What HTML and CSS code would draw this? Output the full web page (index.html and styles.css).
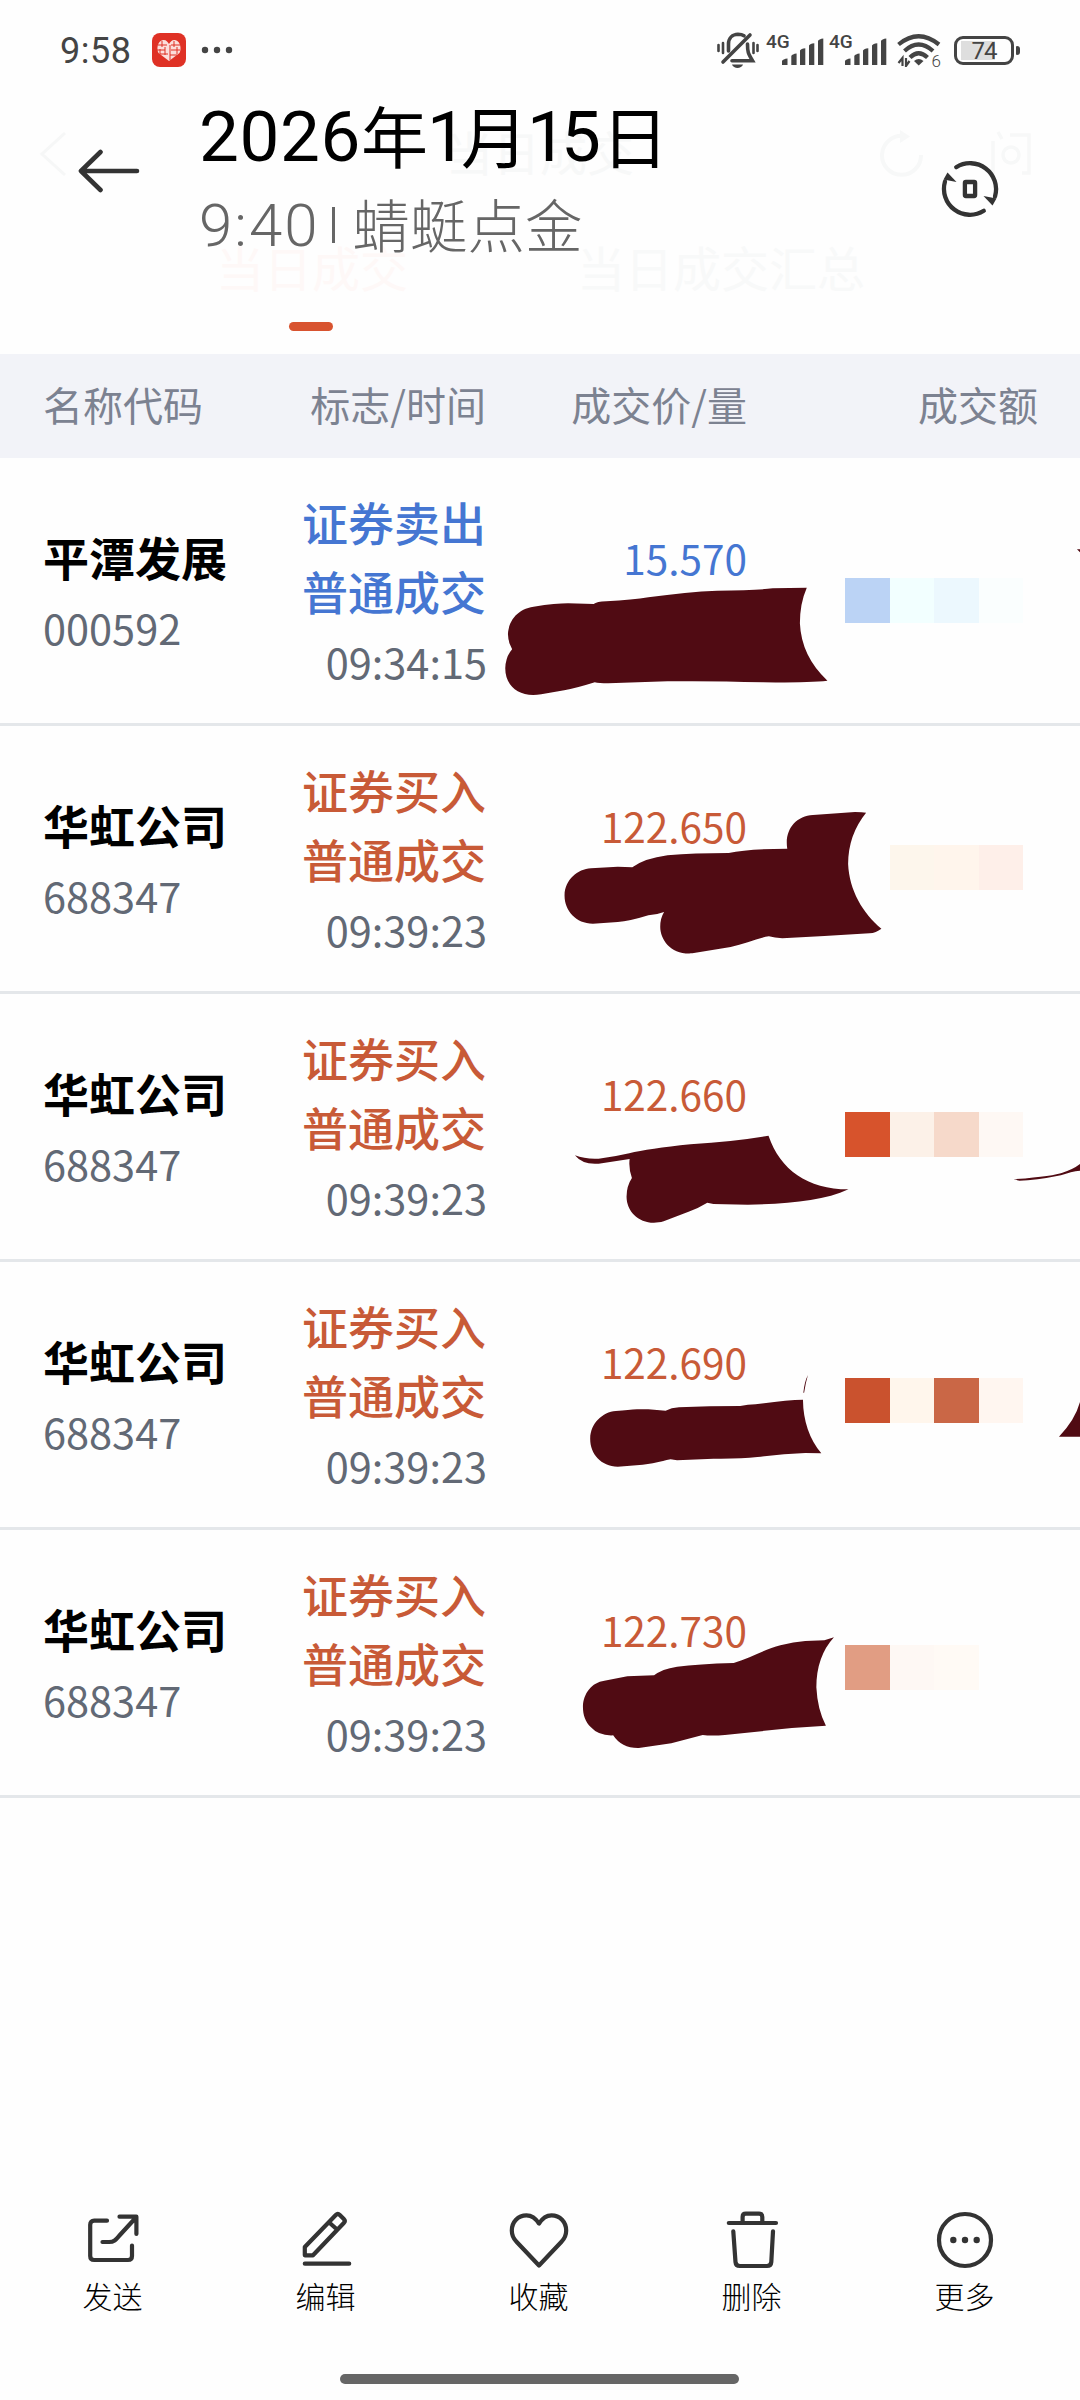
FILE: index.html
```html
<!DOCTYPE html>
<html lang="zh-CN">
<head>
<meta charset="utf-8">
<title>当日成交</title>
<link rel="stylesheet" href="styles.css">
</head>
<body>
<div class="screen">
  <header class="overlay">
    <div class="status">
      <span class="clock">9:58</span>
      <svg class="app" width="34" height="34" viewBox="0 0 34 34"><rect width="34" height="34" rx="8" fill="#df3125"/><path d="M17 28 6.500 20C4.500 17 5 8 11 7c3-.4 4.500 1.500 6 4 1.500-2.500 3-4.400 6-4 6 1 6.500 10 4.500 13Z" fill="#fbdedb"/><path d="M6 12h9M5 17h8M8 21h8M19 12h9M19 17h9M18 22h7M10 8v6M13 14v8M18 12v15M22 8v6M25 14v7M8 16v5" stroke="#df3125" stroke-width="1" fill="none"/></svg>
      <svg class="dots" width="32" height="8" viewBox="0 0 32 8" fill="#444"><circle cx="4" cy="4" r="3.200"/><circle cx="16" cy="4" r="3.200"/><circle cx="28" cy="4" r="3.200"/></svg>
      <div class="tray">
        <svg class="bell" width="42" height="37" viewBox="0 0 42 37" fill="none" stroke="#444" stroke-width="3.600" stroke-linecap="round"><path stroke-width="2.600" d="M1.500 13v6M6 11v10M36.500 11v10M40.500 13v6"/><path d="M11.500 19v-7C11.500 6 15.500 2.500 21 2.300c2.500 0 4.500.5 6 1.500M33 3 6 30M30.500 12c0 8 .5 9 5 16.700H15"/><path d="M15 32.500h11c-1.500 4.500-9.500 4.500-11 0Z" fill="#444" stroke="none"/></svg>
        <div class="signal"><b>4G</b><svg width="42" height="28" viewBox="0 0 42 28" fill="#444"><path d="M0 27v-4q1-2 5.500-2.500V27ZM9.300 27V18q1-2 5.300-2.500V27ZM18 27V12.500q1-2 5.300-2.300V27ZM27 27V7.500q1-2 5.300-2.300V27ZM36 27V3q1-2 5.300-2.500V27Z"/></svg></div>
        <div class="signal"><b>4G</b><svg width="42" height="28" viewBox="0 0 42 28" fill="#444"><path d="M0 27v-4q1-2 5.500-2.500V27ZM9.300 27V18q1-2 5.300-2.500V27ZM18 27V12.500q1-2 5.300-2.300V27ZM27 27V7.500q1-2 5.300-2.300V27ZM36 27V3q1-2 5.300-2.500V27Z"/></svg></div>
        <div class="wifi"><svg width="44" height="33" viewBox="0 0 44 33" fill="none" stroke="#444" stroke-width="4.200"><path d="M1.500 10.500Q21.500-6 42 10.500M7.500 17Q21.500 4 36 17M13 23.500Q21.500 15 30.500 23.500"/><path d="M17 27q4.700-4 9.500 0l-4.800 4.500Z" fill="#444" stroke="none"/><path stroke-width="2.200" d="M5.500 32v-8l-4 5M9 24v8l3.500-5"/></svg><i>6</i></div>
        <div class="battery"><span>74</span></div>
      </div>
    </div>
    <div class="bar">
      <svg class="back" width="64" height="44" viewBox="0 0 64 44" fill="none" stroke="#333" stroke-width="4.600" stroke-linecap="round" stroke-linejoin="round"><path d="M60 22H4M23.500 3 4 22l19.500 19"/></svg>
      <div class="titles">
        <h1><span class="num">2026</span>年<span class="num one">1</span>月<span class="num one">1</span><span class="num">5</span>日</h1>
        <p><span class="num">9:40</span><span class="rule"></span>蜻蜓点金</p>
      </div>
      <svg class="rotate" width="60" height="60" viewBox="-30 -30 60 60" fill="none" stroke="#333" stroke-width="4.300" stroke-linecap="round"><path d="M-13.800-21.800A26 26 0 0 1 25 7.500"/><path d="M13.500 7 26.500 9.500 22.500 16.500Z" fill="#333" stroke="none"/><path d="M13.800 21.800A26 26 0 0 1-25-7.500"/><path d="M-13.500-7-26.500-9.500-22.500-16.500Z" fill="#333" stroke="none"/><rect x="-5.100" y="-7" width="10.200" height="14" rx="1"/></svg>
    </div>
  </header>

  <main>
    <div class="nav">
      <svg width="30" height="48" viewBox="0 0 30 48" fill="none" stroke="#f6f7f7" stroke-width="3"><path d="M26 3 3 24l23 21"/></svg>
      <span class="nav-title">当日成交</span>
      <svg class="reload" width="44" height="48" viewBox="0 0 44 48" fill="none" stroke="#f7f8f8" stroke-width="4"><path d="M24 6A19.500 19.500 0 1 0 41 25"/><path d="M20 0 30 6.500 20 13Z" fill="#f7f8f8" stroke="none"/></svg>
      <svg width="42" height="46" viewBox="0 0 42 46" fill="none" stroke="#f7f8f8" stroke-width="3.500"><path d="M3 10v34M8 1l4 7M20 4h19v38h-7"/><circle cx="21" cy="24" r="8"/></svg>
    </div>
    <div class="tabs"><span class="tab on">当日成交</span><span class="tab">当日成交汇总</span></div>
    <div class="mark"></div>

    <div class="grid head"><span>名称代码</span><span class="r">标志/时间</span><span class="r">成交价/量</span><span class="r">成交额</span></div>

    <div class="grid row sell">
      <div class="name"><b>平潭发展</b><span>000592</span></div>
      <div class="flag"><b>证券卖出</b><b>普通成交</b><span>09:34:15</span></div>
      <div class="price">15.570</div>
      <div class="mosaic m1"><i class="c1"></i><i class="c2"></i><i class="c3"></i><i class="c4"></i></div>
      <svg class="scribble" viewBox="0 354 1568 804" preserveAspectRatio="none"><path d="M140 800Q200 790 230 790L297 792Q305 785 330 784 400 780 440 772 540 755 620 752 720 751 765 745L854 743Q836 790 836 850 840 950 908 1022 860 1028 740 1027 600 1022 490 1024L335 1030Q310 1030 300 1027 250 1045 220 1051L160 1063C105 1075 66 1040 66 985Q67 950 84 928 73 905 73 882C75 840 100 806 140 800ZM1560 628H1568V637Z"/></svg>
    </div>
    <div class="grid row">
      <div class="name"><b>华虹公司</b><span>688347</span></div>
      <div class="flag"><b>证券买入</b><b>普通成交</b><span>09:39:23</span></div>
      <div class="price">122.650</div>
      <div class="mosaic m2"><i class="c1"></i><i class="c2"></i><i class="c3"></i><i class="c4"></i></div>
      <svg class="scribble" viewBox="0 -42 1568 804" preserveAspectRatio="none"><path d="M290 385 360 380 398 382Q430 355 490 346 560 339 650 339 700 327 803 326C795 270 825 228 870 225L980 216Q1000 216 1009 218 962 285 962 372C965 450 1000 520 1049 566Q1035 578 1018 580L900 588 790 595Q770 594 755 589C725 594 690 613 655 621L555 640C500 645 471 600 471 560Q471 535 481 516 460 525 440 526 390 544 360 546L295 551C250 551 220 510 221 465 222 420 255 387 290 385Z"/></svg>
    </div>
    <div class="grid row">
      <div class="name"><b>华虹公司</b><span>688347</span></div>
      <div class="flag"><b>证券买入</b><b>普通成交</b><span>09:39:23</span></div>
      <div class="price">122.660</div>
      <div class="mosaic m3"><i class="c1"></i><i class="c2"></i><i class="c3"></i><i class="c4"></i></div>
      <svg class="scribble" viewBox="0 -48 1568 804" preserveAspectRatio="none"><path d="M248 436Q275 448 310 446 350 441 390 430 440 416 550 403 670 394 754 377C785 480 855 537 963 538 900 572 810 582 700 584L610 582 594 578Q570 595 545 605L480 634C425 652 383 610 383 560Q383 528 397 504 388 475 391 447L310 461Q268 465 248 436ZM1394 508Q1500 498 1522 488 1550 478 1568 462V482Q1545 484 1518 496 1450 512 1410 512Z"/></svg>
    </div>
    <div class="grid row">
      <div class="name"><b>华虹公司</b><span>688347</span></div>
      <div class="flag"><b>证券买入</b><b>普通成交</b><span>09:39:23</span></div>
      <div class="price">122.690</div>
      <div class="mosaic m4"><i class="c1"></i><i class="c2"></i><i class="c3"></i><i class="c4"></i></div>
      <svg class="scribble" viewBox="0 -54 1568 804" preserveAspectRatio="none"><path d="M355 393Q390 390 410 388L440 388 485 392Q500 383 520 382L600 379 680 378Q700 373 720 373 800 360 844 359 845 455 892 520L850 519Q790 521 725 531 680 537 610 536L515 541 498 538C470 545 450 552 425 554L360 560C315 560 287 520 288 475 289 430 320 396 355 393ZM845 338Q848 305 857 285 851 308 847 338ZM1568 366V470H1513Q1555 420 1568 366Z"/></svg>
    </div>
    <div class="grid row">
      <div class="name"><b>华虹公司</b><span>688347</span></div>
      <div class="flag"><b>证券买入</b><b>普通成交</b><span>09:39:23</span></div>
      <div class="price">122.730</div>
      <div class="mosaic m5"><i class="c1"></i><i class="c2"></i><i class="c3"></i></div>
      <svg class="scribble" viewBox="0 -60 1568 804" preserveAspectRatio="none"><path d="M325 392 385 379 455 376Q475 357 515 350 570 342 663 339C710 322 750 295 785 286Q820 276 850 273L900 271 925 262Q879 320 879 412 882 480 904 527L815 534 640 555Q605 558 582 555L500 580 415 594Q370 595 348 556 310 558 290 532C275 515 269 495 269 470 270 430 292 397 325 392Z"/></svg>
    </div>
  </main>

  <footer>
    <div class="actions">
      <div class="action"><svg viewBox="0 0 60 60"><path d="M24 10.700H11.200q-4 0-4 4V46q0 4 4 4H45q4 0 4-4V35.500M36.500 6.700H53.400V24M19.500 32H26c5 0 7-2.500 10-6L52.500 8"/></svg><span>发送</span></div>
      <div class="action"><svg viewBox="0 0 60 60"><path d="M8.800 53.700H53.200M8.800 45.300V37L39.800 5q2-2 4 0l4 4q2 2 0 4L17 45.300ZM33.500 12.700l7.300 6.600"/></svg><span>编辑</span></div>
      <div class="action"><svg viewBox="0 0 60 60"><path d="M30 13.500C26.500 8 22 5.300 17.500 5.300 9 5.300 2.800 12 2.800 20.500c0 4.500 1.700 8.200 4.700 11.200L30 55.500 52.500 31.700c3-3 4.700-6.700 4.700-11.200C57.200 12 51 5.300 42.500 5.300 38 5.300 33.500 8 30 13.500Z"/></svg><span>收藏</span></div>
      <div class="action"><svg viewBox="0 0 60 60"><path d="M6.800 13H54M20.600 12V7q0-3.300 3.300-3.300H37q3.300 0 3.300 3.300v5M11.300 21.300 13.500 52q.3 4 4.300 4H45q4 0 4.300-4L51 21.300"/></svg><span>删除</span></div>
      <div class="action"><svg viewBox="0 0 60 60"><circle cx="30" cy="30" r="26"/><g fill="#333" stroke="none"><circle cx="18.300" cy="30" r="3.200"/><circle cx="30" cy="30" r="3.200"/><circle cx="41.700" cy="30" r="3.200"/></g></svg><span>更多</span></div>
    </div>
    <div class="home"></div>
  </footer>
</div>
</body>
</html>
```
FILE: styles.css
```css
* { box-sizing: border-box; }
body { margin: 0; background: #fefefe; font-family: "Noto Sans CJK SC", sans-serif; }
svg { display: block; flex: none; }
h1, p { margin: 0; }
.screen { position: relative; width: 1080px; height: 2400px; overflow: hidden; display: flex; flex-direction: column; }

/* toolbar floating above the faded page */
.overlay { position: absolute; inset: 0 0 auto 0; z-index: 2; }
.status { display: flex; align-items: center; height: 100px; padding: 0 60px; color: #444; font-family: Roboto, sans-serif; }
.clock { width: 92px; font-size: 36px; line-height: 40px; padding-top: 2px; letter-spacing: .5px; }
.dots { margin-left: 15px; }
.tray { display: flex; align-items: center; margin-left: auto; }
.bell { margin-right: 7px; }
.signal { display: flex; width: 57px; height: 34px; margin-right: 6px; }
.signal b { width: 16px; font-size: 19px; line-height: 17px; font-weight: 500; white-space: nowrap; }
.signal svg { margin-top: 5px; }
.wifi { position: relative; width: 44px; margin: 0 13px 0 5px; }
.wifi i { position: absolute; right: 0; bottom: -3px; font-size: 17px; line-height: 18px; font-style: normal; font-weight: 300; }
.battery { position: relative; width: 60px; height: 29px; margin-right: 6px; border: 3px solid #444; border-radius: 9px; background: linear-gradient(#dedede, #dedede) 4px 2px / 34px 19px no-repeat; text-align: center; }
.battery span { display: block; font-size: 24px; line-height: 25px; letter-spacing: -1px; }
.battery::after { content: ""; position: absolute; right: -9px; top: 7px; width: 4px; height: 9px; border-radius: 1px 3px 3px 1px; background: #444; }
.bar { display: flex; padding: 0 80px 0 77px; }
.back { margin-top: 49px; }
.titles { margin-left: 58px; }
.titles h1 { display: flex; height: 82px; font-size: 67px; line-height: 67px; font-weight: 400; color: #000; white-space: nowrap; }
.titles h1 .num { font: 400 71px/73px Roboto, sans-serif; letter-spacing: .6px; }
.titles h1 .one { width: 33px; text-indent: -1px; }
.titles p { display: flex; font-size: 57.500px; line-height: 83px; font-weight: 300; color: #666; white-space: nowrap; }
.titles p .num { font: 300 60px/88px Roboto, sans-serif; letter-spacing: 2px; }
.rule { width: 3px; height: 36px; margin: 25px 17px 0 13px; background: #666; }
.rotate { margin: 59px 0 0 auto; }

main { flex: 1; }
.nav { display: flex; align-items: center; height: 108px; margin-top: 100px; padding: 0 48px 0 39px; }
.nav-title { margin: -8px 0 0 377px; font-size: 47px; color: #f7f8f8; }
.reload { margin: 0 66px 0 auto; }
.tabs { display: flex; gap: 169px; padding-left: 216px; height: 114px; line-height: 117px; font-size: 48px; color: #f8f9f9; }
.tab.on { color: #fef8f7; }
.mark { width: 44px; height: 9px; margin: 0 0 23px 289px; border-radius: 5px; background: #d8532f; }

.grid { display: grid; grid-template-columns: 240px 203px 261px 291px; padding: 0 43px; }
.head { height: 104px; line-height: 100px; background: #f2f3f8; color: #7c8291; font-size: 40px; }
.r { text-align: right; }
.row { position: relative; height: 268px; border-bottom: 3px solid #e4e7ea; color: #c85a37; }
.row b, .row span { display: block; white-space: nowrap; }
.name { padding-top: 62px; }
.name b { font-size: 46px; line-height: 72px; font-weight: 700; color: #000; }
.name span { font-size: 41.500px; line-height: 71px; color: #626975; }
.flag { display: flex; flex-direction: column; align-items: flex-end; padding-top: 29px; }
.flag b { font-size: 46px; line-height: 69px; font-weight: 500; }
.flag span { margin-right: -1px; font-size: 41.500px; line-height: 73px; color: #626975; }
.price { padding-top: 65px; text-align: right; font-size: 40.500px; line-height: 70px; }
.sell { color: #4576d2; }
.mosaic { display: grid; grid-template-columns: 45px 44px 45px 44px; height: 45px; margin: 119px 0 0 98px; }
.m1 { margin-top: 120px; } .m3 { margin-top: 118px; } .m4 { margin-top: 116px; } .m5 { margin-top: 115px; }
.m1 .c1 { background: #bbd3f5; } .m1 .c2 { background: #f2ffff; } .m1 .c3 { background: #ecf8fe; } .m1 .c4 { background: #fafefe; }
.m2 .c2 { background: #fdf6ec; } .m2 .c3 { background: #fff5ec; } .m2 .c4 { background: #feefe9; }
.m3 .c1 { background: #d7532c; } .m3 .c2 { background: #fcf1e8; } .m3 .c3 { background: #f6d9ca; } .m3 .c4 { background: #fef8f4; }
.m4 .c1 { background: #ca522e; } .m4 .c2 { background: #fff6ec; } .m4 .c3 { background: #ca6746; } .m4 .c4 { background: #fff6f0; }
.m5 .c1 { background: #e19d83; } .m5 .c2 { background: #fef8f4; } .m5 .c3 { background: #fffaf5; }
/* marker strokes drawn over the volume figures */
.scribble { position: absolute; left: 480px; top: 0; width: 600px; height: 268px; fill: #500b13; }

footer { height: 200px; }
.actions { display: grid; grid-template-columns: repeat(5, 213px); height: 174px; padding: 10px 0 0 6px; }
.action { display: flex; flex-direction: column; align-items: center; font-size: 30px; line-height: 50px; font-weight: 300; color: #000; }
.action svg { width: 60px; height: 60px; fill: none; stroke: #333; stroke-width: 4.2; stroke-linecap: round; stroke-linejoin: round; }
.action span { margin-top: 0; }
.home { width: 399px; height: 10px; margin: 0 0 0 340px; border-radius: 5px; background: #666; }
```
